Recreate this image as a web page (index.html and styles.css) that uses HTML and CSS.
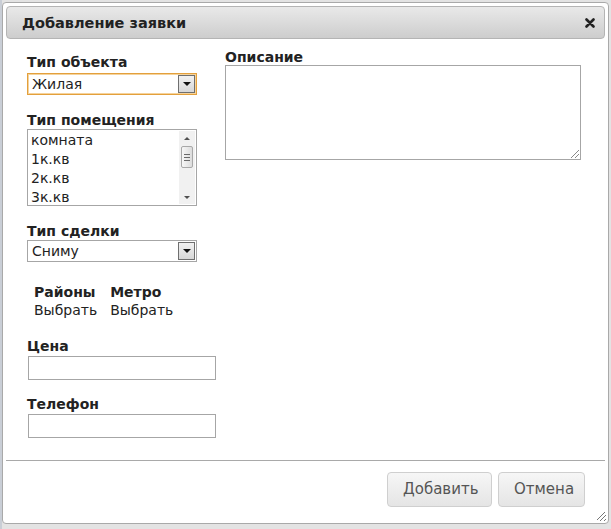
FILE: index.html
```html
<!DOCTYPE html>
<html lang="ru">
<head>
<meta charset="utf-8">
<title>Добавление заявки</title>
<link rel="stylesheet" href="styles.css">
</head>
<body>
<div class="dialog">
  <div class="titlebar">
    <span class="title">Добавление заявки</span>
    <svg class="close" width="10" height="10" viewBox="0 0 10 10"><path d="M1.5 1.5 L8.5 8.5 M8.5 1.5 L1.5 8.5" stroke="#222" stroke-width="2.6" stroke-linecap="round"/></svg>
  </div>
  <div class="content">
    <div class="col-left">
      <div class="label">Тип объекта</div>
      <div class="select focused"><span>Жилая</span><span class="arrow"><i></i></span></div>

      <div class="label gap">Тип помещения</div>
      <div class="listbox">
        <div class="options">
          <div>комната</div>
          <div>1к.кв</div>
          <div>2к.кв</div>
          <div>3к.кв</div>
        </div>
        <div class="scrollbar">
          <span class="up"></span>
          <span class="thumb"><i></i><i></i><i></i></span>
          <span class="down"></span>
        </div>
      </div>

      <div class="label gap2">Тип сделки</div>
      <div class="select"><span>Сниму</span><span class="arrow"><i></i></span></div>

      <div class="pickers">
        <div class="picker"><b>Районы</b><span>Выбрать</span></div>
        <div class="picker"><b>Метро</b><span>Выбрать</span></div>
      </div>

      <div class="label price">Цена</div>
      <div class="input"></div>
      <div class="label phone">Телефон</div>
      <div class="input"></div>
    </div>
    <div class="col-right">
      <div class="label">Описание</div>
      <div class="textarea"><span class="grip"></span></div>
    </div>
  </div>
  <div class="buttonpane">
    <button class="btn add">Добавить</button>
    <button class="btn cancel">Отмена</button>
  </div>
  <span class="resize"></span>
</div>
</body>
</html>
```

FILE: styles.css
```css
html, body {
  margin: 0;
  padding: 0;
}
body {
  background: #e3e3e3;
  font-family: "DejaVu Sans", Verdana, sans-serif;
  color: #222;
  width: 611px;
  height: 529px;
  overflow: hidden;
  border-left: 2px solid #c9ced6;
  box-sizing: border-box;
  padding-top: 2px;
}
.dialog {
  position: relative;
  width: 607px;
  height: 522px;
  box-sizing: border-box;
  border: 1px solid #a9a9a9;
  border-radius: 4px;
  background: #fff;
  padding: 3px;
}
.titlebar {
  height: 33px;
  box-sizing: border-box;
  border: 1px solid #b4b4b4;
  border-radius: 4px;
  background: linear-gradient(#e9e9e9, #cdcdcd);
  display: flex;
  align-items: center;
  justify-content: space-between;
  padding: 0 9px 0 15px;
}
.title {
  font-weight: bold;
  font-size: 14.5px;
  color: #222;
}
.close {
  display: block;
}
.content {
  display: flex;
  padding: 10px 0 0 21px;
  height: 422px;
  box-sizing: border-box;
  border-bottom: 1px solid #a9a9a9;
}
.col-left {
  width: 198px;
  padding-top: 5px;
}
.label {
  font-weight: bold;
  font-size: 14px;
  line-height: 17px;
  color: #222;
}
.select {
  width: 170px;
  height: 22px;
  box-sizing: border-box;
  border: 1px solid #a6a6a6;
  display: flex;
  align-items: center;
  justify-content: space-between;
  font-size: 14px;
  padding-left: 4px;
  background: #fff;
}
.select.focused {
  margin-top: 2px;
  border-color: #e3a03c;
  box-shadow: inset 0 0 0 1px #f5d39c;
}
.arrow {
  width: 17px;
  height: 18px;
  box-sizing: border-box;
  border: 1px solid #6f6f6f;
  background: linear-gradient(#f1f1f1, #d7d7d7);
  margin-right: 1px;
  display: flex;
  align-items: center;
  justify-content: center;
}
.arrow i {
  width: 0;
  height: 0;
  border-left: 4px solid transparent;
  border-right: 4px solid transparent;
  border-top: 4px solid #111;
}
.gap { margin-top: 17px; }
.gap2 { margin-top: 17px; }
.listbox {
  margin-top: 0;
  width: 170px;
  height: 77px;
  box-sizing: border-box;
  border: 1px solid #a6a6a6;
  display: flex;
  overflow: hidden;
}
.options {
  flex: 1;
  font-size: 14px;
  line-height: 19px;
  padding-left: 3px;
  padding-top: 1px;
}
.scrollbar {
  width: 16px;
  margin: 1px 1px 1px 0;
  background: #f1f1f1;
  display: flex;
  flex-direction: column;
  align-items: center;
}
.up, .down {
  width: 0;
  height: 0;
  border-left: 3px solid transparent;
  border-right: 3px solid transparent;
}
.up {
  margin-top: 6px;
  border-bottom: 3px solid #505050;
}
.down {
  margin-top: auto;
  margin-bottom: 5px;
  border-top: 3px solid #505050;
}
.thumb {
  margin-top: 6px;
  width: 12px;
  height: 22px;
  box-sizing: border-box;
  border: 1px solid #a8a8a8;
  border-radius: 2px;
  background: linear-gradient(90deg, #f7f7f7, #dcdcdc);
  display: flex;
  flex-direction: column;
  align-items: center;
  justify-content: center;
  gap: 2px;
}
.thumb i {
  display: block;
  width: 6px;
  height: 1px;
  background: #6a6a6a;
}
.pickers {
  display: flex;
  gap: 13px;
  margin: 21px 0 0 7px;
}
.picker {
  display: flex;
  flex-direction: column;
  font-size: 14px;
  line-height: 18px;
}
.price { margin-top: 19px; }
.phone { margin-top: 16px; }
.input {
  margin: 1px 0 0 1px;
  width: 188px;
  height: 24px;
  box-sizing: border-box;
  border: 1px solid #a6a6a6;
  background: #fff;
}
.textarea {
  position: relative;
  margin-top: -1px;
  width: 356px;
  height: 95px;
  box-sizing: border-box;
  border: 1px solid #a6a6a6;
}
.grip {
  position: absolute;
  right: 1px;
  bottom: 1px;
  width: 8px;
  height: 8px;
  background: linear-gradient(135deg, transparent 45%, #888 45%, #888 52%, transparent 52%, transparent 70%, #888 70%, #888 77%, transparent 77%);
}
.buttonpane {
  display: flex;
  justify-content: flex-end;
  gap: 6px;
  padding: 11px 20px 0 0;
}
.btn {
  height: 35px;
  box-sizing: border-box;
  border: 1px solid #cfcfcf;
  border-radius: 4px;
  background: linear-gradient(#f6f6f6, #e5e5e5);
  font-family: "DejaVu Sans", Verdana, sans-serif;
  font-size: 15px;
  color: #555;
  padding: 0 15px 2px;
  cursor: pointer;
}
.btn.add { width: 105px; }
.btn.cancel { width: 87px; }
.resize {
  position: absolute;
  right: 2px;
  bottom: 2px;
  width: 9px;
  height: 9px;
  background: linear-gradient(135deg, transparent 40%, #777 40%, #777 48%, transparent 48%, transparent 62%, #777 62%, #777 70%, transparent 70%, transparent 84%, #777 84%, #777 92%, transparent 92%);
}
```
